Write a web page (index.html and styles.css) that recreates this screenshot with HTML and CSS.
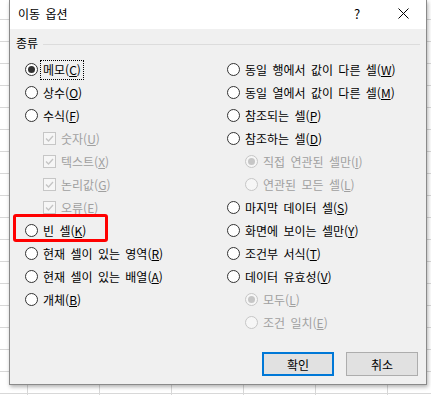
FILE: index.html
```html
<!DOCTYPE html>
<html lang="ko">

<head>
    <meta charset="UTF-8">
    <meta name="viewport" content="width=device-width, initial-scale=1.0">
    <title>이동 옵션</title>
    <link rel="stylesheet" href="styles.css">
</head>

<body>
    <div class="dialog">
        <div class="titlebar">
            <div class="title">이동 옵션</div>
            <div class="tb-btn help">?</div>
            <div class="tb-btn close">
                <svg width="11" height="11" viewBox="0 0 11 11"><path d="M0.5 0.5L10.5 10.5M10.5 0.5L0.5 10.5" stroke="#000" stroke-width="1" fill="none"/></svg>
            </div>
        </div>

        <div class="content">
            <div class="group-head">
                <span>종류</span>
                <span class="rule"></span>
            </div>

            <div class="options">
                <div class="col">
                    <div class="opt"><span class="radio on"></span><span class="txt focus">메모(<u>C</u>)</span></div>
                    <div class="opt"><span class="radio"></span><span class="txt">상수(<u>O</u>)</span></div>
                    <div class="opt"><span class="radio"></span><span class="txt">수식(<u>F</u>)</span></div>
                    <div class="opt sub off"><span class="check"><svg width="11" height="11" viewBox="0 0 11 11"><path d="M2 5.5L4.5 8L9 3" stroke="#c4c4c4" stroke-width="1.3" fill="none"/></svg></span><span class="txt">숫자(<u>U</u>)</span></div>
                    <div class="opt sub off"><span class="check"><svg width="11" height="11" viewBox="0 0 11 11"><path d="M2 5.5L4.5 8L9 3" stroke="#c4c4c4" stroke-width="1.3" fill="none"/></svg></span><span class="txt">텍스트(<u>X</u>)</span></div>
                    <div class="opt sub off"><span class="check"><svg width="11" height="11" viewBox="0 0 11 11"><path d="M2 5.5L4.5 8L9 3" stroke="#c4c4c4" stroke-width="1.3" fill="none"/></svg></span><span class="txt">논리값(<u>G</u>)</span></div>
                    <div class="opt sub off"><span class="check"><svg width="11" height="11" viewBox="0 0 11 11"><path d="M2 5.5L4.5 8L9 3" stroke="#c4c4c4" stroke-width="1.3" fill="none"/></svg></span><span class="txt">오류(<u>E</u>)</span></div>
                    <div class="opt mark"><span class="radio"></span><span class="txt">빈 셀(<u>K</u>)</span></div>
                    <div class="opt"><span class="radio"></span><span class="txt">현재 셀이 있는 영역(<u>R</u>)</span></div>
                    <div class="opt"><span class="radio"></span><span class="txt">현재 셀이 있는 배열(<u>A</u>)</span></div>
                    <div class="opt"><span class="radio"></span><span class="txt">개체(<u>B</u>)</span></div>
                </div>
                <div class="col">
                    <div class="opt"><span class="radio"></span><span class="txt">동일 행에서 값이 다른 셀(<u>W</u>)</span></div>
                    <div class="opt"><span class="radio"></span><span class="txt">동일 열에서 값이 다른 셀(<u>M</u>)</span></div>
                    <div class="opt"><span class="radio"></span><span class="txt">참조되는 셀(<u>P</u>)</span></div>
                    <div class="opt"><span class="radio"></span><span class="txt">참조하는 셀(<u>D</u>)</span></div>
                    <div class="opt sub off"><span class="radio on"></span><span class="txt">직접 연관된 셀만(<u>I</u>)</span></div>
                    <div class="opt sub off"><span class="radio"></span><span class="txt">연관된 모든 셀(<u>L</u>)</span></div>
                    <div class="opt"><span class="radio"></span><span class="txt">마지막 데이터 셀(<u>S</u>)</span></div>
                    <div class="opt"><span class="radio"></span><span class="txt">화면에 보이는 셀만(<u>Y</u>)</span></div>
                    <div class="opt"><span class="radio"></span><span class="txt">조건부 서식(<u>T</u>)</span></div>
                    <div class="opt"><span class="radio"></span><span class="txt">데이터 유효성(<u>V</u>)</span></div>
                    <div class="opt sub off"><span class="radio on"></span><span class="txt">모두(<u>L</u>)</span></div>
                    <div class="opt sub off"><span class="radio"></span><span class="txt">조건 일치(<u>E</u>)</span></div>
                </div>
            </div>

            <div class="buttons">
                <button type="button" class="btn default">확인</button>
                <button type="button" class="btn">취소</button>
            </div>
        </div>
    </div>
</body>

</html>
```

FILE: styles.css
```css
body {
    margin: 0;
    height: 395px;
    overflow: hidden;
    font-family: "Noto Sans CJK KR", "Noto Sans", sans-serif;
    font-size: 12px;
    color: #000;
    background-color: #fff;
    /* excel grid behind the dialog */
    background-image:
        linear-gradient(#d8d8d8 1px, transparent 1px),
        linear-gradient(90deg, #d8d8d8 1px, transparent 1px);
    background-size: 72px 22px;
    background-position: 27px 19px;
}

.dialog {
    margin-left: 9px;
    width: 418px;
    height: 385px;
    box-sizing: border-box;
    border: 1px solid #8a8a8a;
    border-top: 0;
    background-color: #f0f0f0;
    display: flex;
    flex-direction: column;
    box-shadow: 1px 2px 4px rgba(0, 0, 0, 0.3);
}

.titlebar {
    height: 29px;
    background-color: #fff;
    display: flex;
    flex: none;
}

.title {
    flex: 1;
    padding-left: 8px;
    line-height: 27px;
    word-spacing: 2px;
}

.tb-btn {
    width: 46px;
    height: 27px;
    display: flex;
    align-items: center;
    justify-content: center;
}

.help {
    font-size: 13px;
}

.content {
    flex: 1;
    display: flex;
    flex-direction: column;
    padding: 6px 6px 8px 6px;
}

.group-head {
    display: flex;
    align-items: center;
    gap: 5px;
    line-height: 16px;
}

.group-head .rule {
    flex: 1;
    height: 1px;
    margin-top: 2px;
    background-color: #dcdcdc;
}

.options {
    display: grid;
    grid-template-columns: 202px 1fr;
    margin-top: 7px;
    padding-left: 9px;
}

.opt {
    display: flex;
    align-items: center;
    height: 23px;
    gap: 2px;
    position: relative;
}

.opt.sub {
    padding-left: 18px;
}

.opt.off {
    color: #a0a0a0;
}

.radio {
    flex: none;
    width: 13px;
    height: 13px;
    box-sizing: border-box;
    border: 1px solid #333;
    border-radius: 50%;
    background-color: #fff;
    position: relative;
}

.radio.on::after {
    content: "";
    position: absolute;
    left: 2px;
    top: 2px;
    width: 7px;
    height: 7px;
    border-radius: 50%;
    background-color: #333;
}

.opt.off .radio {
    border-color: #c6c6c6;
    background-color: #f6f6f6;
}

.opt.off .radio.on::after {
    background-color: #c6c6c6;
}

.check {
    flex: none;
    width: 13px;
    height: 13px;
    box-sizing: border-box;
    border: 1px solid #c6c6c6;
    background-color: #f6f6f6;
    display: flex;
}

.txt {
    border: 1px solid transparent;
    padding: 0 2px;
    line-height: 18px;
    white-space: nowrap;
    word-spacing: 2px;
}

.txt.focus {
    border: 1px dotted #000;
}

/* red highlight drawn over the "blank cells" option */
.opt.mark::after {
    content: "";
    position: absolute;
    left: -12px;
    top: -5px;
    width: 95px;
    height: 28px;
    box-sizing: border-box;
    border: 3px solid #ff0000;
    border-radius: 3px;
}

.buttons {
    margin-top: auto;
    display: flex;
    justify-content: flex-end;
    gap: 12px;
    padding-right: 2px;
}

.btn {
    width: 72px;
    height: 24px;
    box-sizing: border-box;
    border: 1px solid #adadad;
    background-color: #e1e1e1;
    font: inherit;
    color: #000;
    padding: 0;
}

.btn.default {
    border: 2px solid #0078d7;
}
```
